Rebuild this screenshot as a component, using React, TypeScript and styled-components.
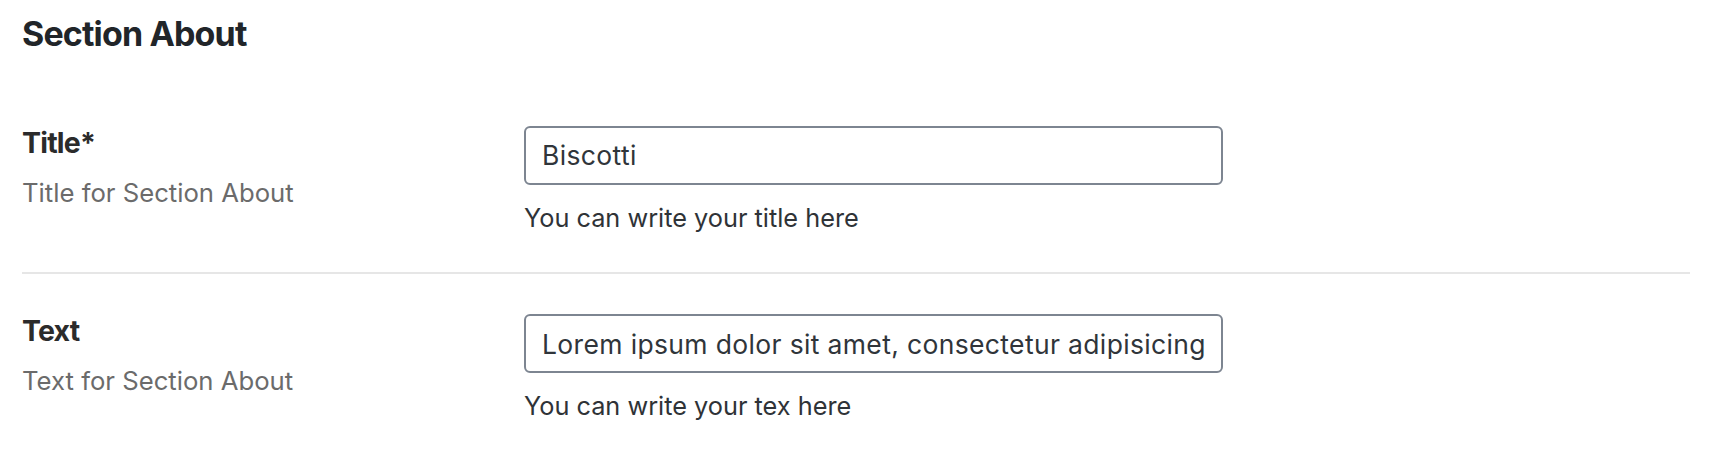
import React from "react";
import styled, { createGlobalStyle } from "styled-components";

const GlobalStyle = createGlobalStyle`
  html, body {
    margin: 0;
    padding: 0;
    background: #ffffff;
  }
  body {
    font-family: Inter, "Noto Sans", "Liberation Sans", sans-serif;
    -webkit-font-smoothing: antialiased;
  }
  * { box-sizing: border-box; }
`;

const Page = styled.div`
  padding: 14px 26px 0 22px;
`;

const Heading = styled.h2`
  margin: 0 0 31px;
  font-size: 34px;
  line-height: 1.2;
  font-weight: 700;
  color: #212529;
  letter-spacing: -0.85px;
`;

const Row = styled.div<{ $divider?: boolean }>`
  display: grid;
  grid-template-columns: 502px 699px;
  padding: 40px 0 ${(p) => (p.$divider ? "39px" : "0")};
  border-bottom: ${(p) => (p.$divider ? "2px solid #e6e6e6" : "none")};
`;

const LabelCol = styled.div`
  display: flex;
  flex-direction: column;
  gap: 18px;
`;

const Label = styled.label`
  font-size: 28.5px;
  line-height: 1.2;
  font-weight: 700;
  color: #2b2b2b;
  letter-spacing: -0.8px;
`;

const Description = styled.div`
  font-size: 25.7px;
  line-height: 1.2;
  color: #6b6b6b;
`;

const FieldCol = styled.div`
  display: flex;
  flex-direction: column;
  gap: 18px;
`;

const Input = styled.input`
  width: 100%;
  height: 59px;
  padding: 0 16px;
  border: 2px solid #7d8591;
  border-radius: 6px;
  font-family: inherit;
  font-size: 26.5px;
  letter-spacing: 0.35px;
  color: #30353a;
  background: #fff;
  outline: none;
`;

const Helper = styled.div`
  font-size: 25.3px;
  line-height: 1.2;
  color: #2f3337;
`;

type FieldProps = {
  label: string;
  description: string;
  value: string;
  helper: string;
  divider?: boolean;
};

const Field: React.FC<FieldProps> = ({ label, description, value, helper, divider }) => (
  <Row $divider={divider}>
    <LabelCol>
      <Label>{label}</Label>
      <Description>{description}</Description>
    </LabelCol>
    <FieldCol>
      <Input defaultValue={value} />
      <Helper>{helper}</Helper>
    </FieldCol>
  </Row>
);

export default function App() {
  return (
    <>
      <GlobalStyle />
      <Page>
        <Heading>Section About</Heading>
        <Field
          label="Title*"
          description="Title for Section About"
          value="Biscotti"
          helper="You can write your title here"
          divider
        />
        <Field
          label="Text"
          description="Text for Section About"
          value="Lorem ipsum dolor sit amet, consectetur adipisicing elit, sed do eiusmod tempor incididunt ut labore et dolore magna aliqua."
          helper="You can write your tex here"
        />
      </Page>
    </>
  );
}
